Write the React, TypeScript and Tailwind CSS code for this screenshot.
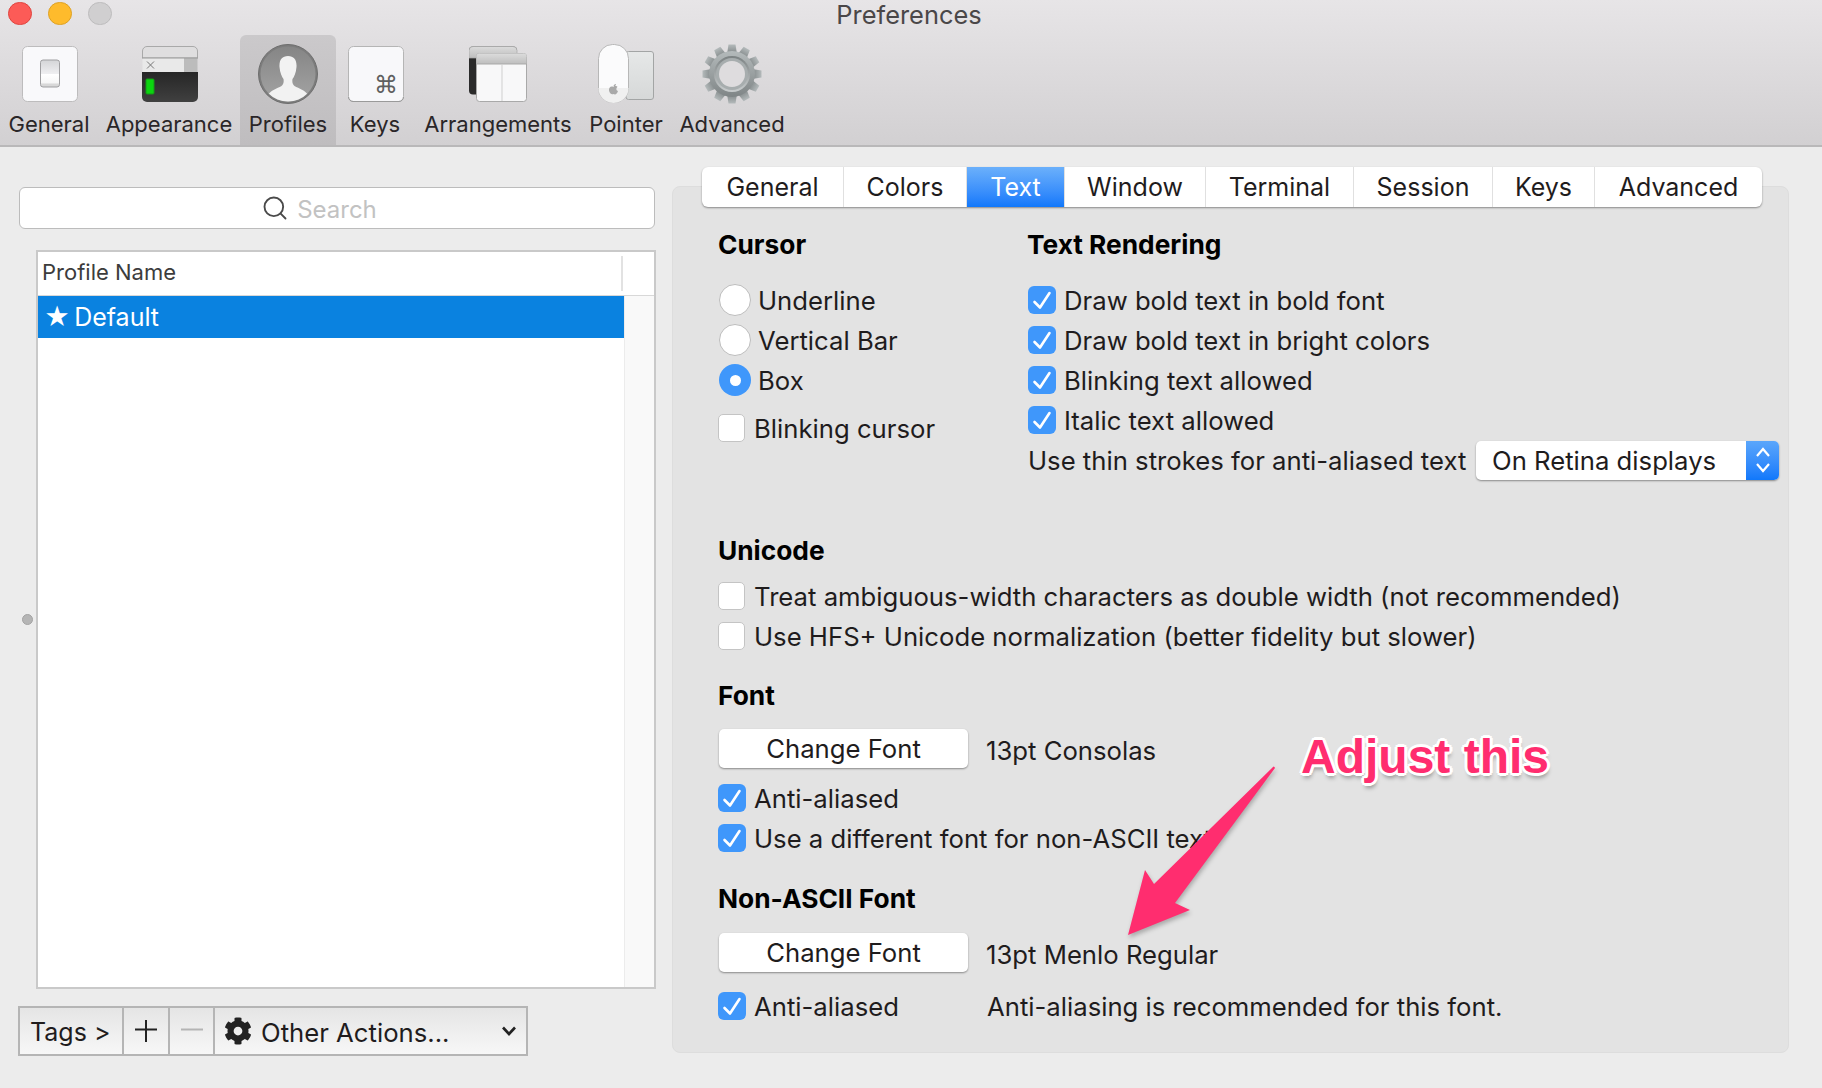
import React from "react";
import { Search } from "lucide-react";
import { FaCog } from "react-icons/fa";

function Icon1() {
  return (
    <svg width="56" height="56" viewBox="0 0 56 56">
      <defs>
        <linearGradient id="g1" x1="0" y1="0" x2="0" y2="1"><stop offset="0" stopColor="#d4d5d7" /><stop offset="0.5" stopColor="#eeeef0" /><stop offset="0.52" stopColor="#ffffff" /><stop offset="0.86" stopColor="#f6f6f6" /><stop offset="0.88" stopColor="#d8d8d8" /><stop offset="1" stopColor="#d8d8d8" /></linearGradient>
      </defs>
      <rect x="0.5" y="0.5" width="55" height="55" rx="5" fill="#f9f9fb" stroke="#bdbcbd" />
      <rect x="18.5" y="14" width="19" height="27" rx="2.5" fill="url(#g1)" stroke="#9f9fa1" />
    </svg>
  );
}
function Icon2() {
  return (
    <svg width="56" height="56" viewBox="0 0 56 56">
      <defs>
        <linearGradient id="g2a" x1="0" y1="0" x2="0" y2="1"><stop offset="0" stopColor="#262626" /><stop offset="1" stopColor="#404040" /></linearGradient>
      </defs>
      <path d="M0.5 12 V5 a4.5 4.5 0 0 1 4.5 -4.5 H51 a4.5 4.5 0 0 1 4.5 4.5 V12 Z" fill="#dfdedf" stroke="#a9a9a9" />
      <rect x="0.5" y="12" width="42" height="14" fill="#e9e9e9" />
      <rect x="42" y="12" width="13.5" height="14" fill="#bcbcbc" />
      <path d="M0 12 H56" stroke="#9a9a9a" strokeWidth="1" />
      <path d="M5 15.5 L12 22.5 M12 15.5 L5 22.5" stroke="#777" strokeWidth="1" />
      <path d="M0 26 H56 V51 a5 5 0 0 1 -5 5 H5 a5 5 0 0 1 -5 -5 Z" fill="url(#g2a)" />
      <rect x="4" y="33" width="8" height="15" rx="1" fill="#0bd40f" stroke="#149a17" />
    </svg>
  );
}
function Icon3() {
  return (
    <svg width="60" height="60" viewBox="0 0 60 60">
      <defs>
        <linearGradient id="g3" x1="0" y1="0" x2="0" y2="1"><stop offset="0" stopColor="#858585" /><stop offset="1" stopColor="#a4a4a4" /></linearGradient>
        <clipPath id="c3"><circle cx="30" cy="30" r="27.5" /></clipPath>
      </defs>
      <circle cx="30" cy="30" r="29.5" fill="#7c7c7c" stroke="#6e6e6e" />
      <circle cx="30" cy="30" r="27.5" fill="url(#g3)" />
      <g clipPath="url(#c3)" fill="#f2f2f2">
        <path d="M30 12 C24 12 21 16 21.5 23 C22 29 24 33 25.5 35 C26 38 25.5 40.500 23.500 42 C19 44.500 13 46 9 52 L9 60 H51 V52 C47 46 41 44.500 36.500 42 C34.500 40.500 34 38 34.500 35 C36 33 38 29 38.500 23 C39 16 36 12 30 12 Z" />
      </g>
    </svg>
  );
}
function Icon4() {
  return (
    <svg width="56" height="56" viewBox="0 0 56 56">
      <rect x="0.5" y="0.5" width="55" height="55" rx="5" fill="#f8f8fa" stroke="#b5b5b5" />
      <path d="M0.5 51 a4.5 4.5 0 0 0 4.5 4.5 H51 a4.5 4.5 0 0 0 4.5 -4.5" fill="none" stroke="#9a9a9a" />
      <text x="38" y="47" textAnchor="middle" fontSize="24" fill="#5f5f5f" fontFamily="'DejaVu Sans', sans-serif">⌘</text>
    </svg>
  );
}
function Icon5() {
  return (
    <svg width="58" height="56" viewBox="0 0 58 56">
      <defs>
        <linearGradient id="g5" x1="0" y1="0" x2="0" y2="1"><stop offset="0" stopColor="#dcdcdc" /><stop offset="1" stopColor="#bebebe" /></linearGradient>
      </defs>
      <rect x="0" y="0.5" width="48" height="48" rx="4" fill="#2b2b2b" />
      <path d="M0 12 V4.5 a4 4 0 0 1 4 -4 H44 a4 4 0 0 1 4 4 V12 Z" fill="url(#g5)" stroke="#a8a8a8" strokeWidth="0.7" />
      <rect x="7.5" y="7.5" width="50" height="48" rx="3" fill="#f8f8f9" stroke="#a9a9a9" />
      <path d="M7.5 18 V10.5 a3 3 0 0 1 3 -3 H54.5 a3 3 0 0 1 3 3 V18 Z" fill="url(#g5)" />
      <path d="M7.5 18 H57.5" stroke="#a9a9a9" />
      <path d="M33 18 V55" stroke="#cfcfcf" />
    </svg>
  );
}
function Icon6() {
  return (
    <svg width="56" height="60" viewBox="0 0 56 60">
      <defs>
        <linearGradient id="g6" x1="0" y1="0" x2="0" y2="1"><stop offset="0" stopColor="#e6e8e8" /><stop offset="1" stopColor="#d6d8d8" /></linearGradient>
      </defs>
      <rect x="28" y="7.5" width="27.5" height="48" rx="2.5" fill="url(#g6)" stroke="#a3a5a5" />
      <rect x="0.5" y="0.5" width="30" height="58" rx="14" fill="#fbfbfc" stroke="#b7b7b7" />
      <path d="M0.5 44 a15 15 0 0 0 30 0" fill="#f0f0f0" />
      <path d="M15.500 43 c1 -1.500 3.500 -1 4 0 c-2 1.500 -1 3.500 .5 4 c-1 3 -2.500 4 -4.500 3 c-2 1 -4 -1 -4.500 -3.500 c-.5 -3 2 -5 4.500 -3.500 Z M15.500 42.500 c0 -1.500 1 -2.500 2.500 -2.500 c0 1.500 -1 2.500 -2.500 2.500 Z" fill="#a9a9a9" />
    </svg>
  );
}
function Gear() {
  const angles = [0, 30, 60, 90, 120, 150, 180, 210, 240, 270, 300, 330];
  return (
    <svg width="60" height="60" viewBox="0 0 60 60">
      <defs>
        <linearGradient id="g7" x1="0" y1="0" x2="0" y2="1"><stop offset="0" stopColor="#b4babb" /><stop offset="1" stopColor="#7f8586" /></linearGradient>
        <linearGradient id="g7b" x1="0" y1="0" x2="0" y2="1"><stop offset="0" stopColor="#7b8182" /><stop offset="1" stopColor="#c9cdce" /></linearGradient>
      </defs>
      {angles.map((a) => (
        <path key={a} d="M26.500 0.5 H33.500 L35 10 H25 Z" fill="url(#g7)" transform={`rotate(${a} 30 30)`} />
      ))}
      <circle cx="30" cy="30" r="23" fill="url(#g7)" />
      <circle cx="30" cy="30" r="18" fill="url(#g7b)" />
      <circle cx="30" cy="30" r="16" fill="#a7adae" />
      <circle cx="30" cy="30" r="13" fill="#dedcde" />
    </svg>
  );
}

function ToolItem({ label, width, active, nudge, children }: { label: string; width: string; active?: boolean; nudge?: boolean; children: React.ReactNode }) {
  return (
    <div className={`${width} h-[110px] flex flex-col items-center shrink-0 rounded-t-[6px] ${active ? "bg-gradient-to-b from-[#cbc9cb] to-[#bfbdbf]" : ""}`}>
      <div className={`h-[68px] mt-[5px] flex items-center justify-center ${nudge ? "pl-[2px]" : ""}`}>{children}</div>
      <div className="text-[22px] leading-[26px] mt-[3px] text-[#2a2628] whitespace-nowrap">{label}</div>
    </div>
  );
}

function Check({ on = true, className = "" }: { on?: boolean; className?: string }) {
  return on ? (
    <span className={`w-[28px] h-[28px] rounded-[6px] bg-[#3f97fb] shrink-0 flex items-center justify-center ${className}`}>
      <svg width="28" height="28" viewBox="0 0 28 28"><path d="M6.500 16 L12 21.500 L21.500 7" fill="none" stroke="#fff" strokeWidth="2.6" strokeLinecap="round" strokeLinejoin="round" /></svg>
    </span>
  ) : (
    <span className={`w-[27px] h-[28px] rounded-[5px] bg-white border border-[#c4c4c4] shrink-0 ${className}`} />
  );
}
function CheckRow({ label, on = true }: { label: string; on?: boolean }) {
  return (
    <div className="h-[40px] flex items-center whitespace-nowrap">
      <Check on={on} className={on ? "mr-[8px]" : "mr-[9px]"} />
      <span className="pt-[2px]">{label}</span>
    </div>
  );
}
function RadioRow({ label, on }: { label: string; on?: boolean }) {
  return (
    <div className="h-[40px] flex items-center whitespace-nowrap ml-[1px]">
      <span className={`w-[32px] h-[32px] rounded-full shrink-0 mr-[7px] flex items-center justify-center ${on ? "bg-[#3f97fb]" : "bg-white border border-[#bdbdbd]"}`}>
        {on ? <span className="w-[11px] h-[11px] rounded-full bg-white" /> : null}
      </span>
      <span className="pt-[2px]">{label}</span>
    </div>
  );
}
function Heading({ children, className = "" }: { children: React.ReactNode; className?: string }) {
  return <div className={`h-[36px] flex items-center font-bold text-black text-[26.3px] whitespace-nowrap ${className}`}>{children}</div>;
}
function FontButton() {
  return (
    <div className="w-[249px] h-[39px] pt-[2px] bg-white rounded-[5px] shadow-[0_1px_2px_rgba(0,0,0,0.4)] flex items-center justify-center shrink-0">Change Font</div>
  );
}

const tabs: [string, string, boolean?][] = [
  ["General", "w-[142px]"],
  ["Colors", "w-[123px]"],
  ["Text", "w-[98px]", true],
  ["Window", "w-[141px]"],
  ["Terminal", "w-[148px]"],
  ["Session", "w-[139px]"],
  ["Keys", "w-[102px]"],
  ["Advanced", "w-[167px]"],
];

export default function App() {
  return (
    <div className="w-[1822px] h-[1088px] relative overflow-hidden flex flex-col bg-[#ececec] text-[#1f1c1d] text-[25.7px] font-['Inter',sans-serif]">
      {/* Toolbar */}
      <div className="h-[147px] shrink-0 border-b-2 border-[#b9b8b9] bg-gradient-to-b from-[#e7e5e7] to-[#d2d0d2] flex flex-col">
        <div className="h-[36px] flex relative">
          <div className="flex items-start pt-[2px] pl-[8px] gap-[16px]">
            <span className="w-[24px] h-[23px] rounded-full bg-[#fc5b57] border border-[#e0443e]" />
            <span className="w-[24px] h-[23px] rounded-full bg-[#febb2c] border border-[#dea123]" />
            <span className="w-[24px] h-[23px] rounded-full bg-[#d0cfd0] border border-[#bdbcbd]" />
          </div>
          <div className="absolute left-0 right-0 top-0 h-[30px] flex items-center justify-center text-[#4a4748] text-[25.4px] pr-[4px]">Preferences</div>
        </div>
        <div className="flex">
          <ToolItem label="General" width="w-[98px]" nudge><Icon1 /></ToolItem>
          <ToolItem label="Appearance" width="w-[142px]" nudge><Icon2 /></ToolItem>
          <ToolItem label="Profiles" width="w-[96px]" active><Icon3 /></ToolItem>
          <ToolItem label="Keys" width="w-[78px]" nudge><Icon4 /></ToolItem>
          <ToolItem label="Arrangements" width="w-[168px]"><Icon5 /></ToolItem>
          <ToolItem label="Pointer" width="w-[88px]"><Icon6 /></ToolItem>
          <ToolItem label="Advanced" width="w-[124px]"><Gear /></ToolItem>
        </div>
      </div>

      <div className="flex flex-1 min-h-0">
        {/* Left column */}
        <div className="w-[672px] shrink-0 pl-[19px] flex flex-col">
          <div className="mt-[40px] w-[636px] h-[42px] bg-white border border-[#bcbcbc] rounded-[6px] flex items-center justify-center gap-[8px] pr-[36px]">
            <Search size={28} strokeWidth={1.6} className="text-[#4a4a4a]" />
            <span className="text-[#c2c2c2] text-[24px] pt-[4px]">Search</span>
          </div>
          <div className="flex mt-[21px] h-[739px]">
            <div className="w-[17px] shrink-0 flex items-center">
              <span className="w-[11px] h-[11px] ml-[3px] rounded-full bg-[#b5b5b5] border border-[#a3a3a3]" />
            </div>
            <div className="w-[620px] border-2 border-[#c9c9c9] bg-white flex flex-col">
              <div className="h-[44px] shrink-0 border-b border-[#d8d8d8] flex items-center relative">
                <span className="pl-[4px] pb-[2px] text-[22px] text-[#3c3c3c]">Profile Name</span>
                <span className="absolute left-[583px] top-[4px] bottom-[4px] w-[2px] bg-[#e2e2e2]" />
              </div>
              <div className="flex flex-1 min-h-0">
                <div className="w-[586px] shrink-0">
                  <div className="h-[42px] bg-[#0a82e0] text-white flex items-center pl-[6px] pt-[2px] text-[25px]"><span className="mr-[4px]">★</span>Default</div>
                </div>
                <div className="flex-1 bg-[#f9f9f9] border-l border-[#ececec]" />
              </div>
            </div>
          </div>
          <div className="mt-[17px] -ml-[1px] w-[510px] h-[50px] border-2 border-[#b5b5b5] bg-gradient-to-b from-[#e5e5e5] to-[#f7f7f7] flex items-stretch">
            <div className="w-[104px] shrink-0 border-r-2 border-[#b5b5b5] flex items-center pl-[10px] pt-[4px] text-[25px]">Tags &gt;</div>
            <div className="w-[46px] shrink-0 border-r-2 border-[#b5b5b5] flex items-center justify-center">
              <svg width="24" height="28" viewBox="0 0 24 28"><path d="M12 3 V25 M1 12.500 H23" stroke="#222" strokeWidth="2" /></svg>
            </div>
            <div className="w-[45px] shrink-0 border-r-2 border-[#b5b5b5] flex items-center justify-center">
              <svg width="24" height="28" viewBox="0 0 24 28"><path d="M1 12.500 H23" stroke="#b4b4b4" strokeWidth="2" /></svg>
            </div>
            <div className="flex-1 flex items-center pl-[9px]">
              <FaCog size={28} className="text-[#222] mr-[9px]" />
              <span className="pt-[4px]">Other Actions...</span>
              <svg className="ml-auto mr-[9px]" width="16" height="12" viewBox="0 0 16 12"><path d="M2 2.500 L8 9 L14 2.500" fill="none" stroke="#222" strokeWidth="2.6" /></svg>
            </div>
          </div>
        </div>

        {/* Right panel */}
        <div className="mt-[39px] w-[1117px] h-[867px] shrink-0 bg-[#e3e3e3] border border-[#dddddd] rounded-[8px] pl-[45px] flex flex-col">
          <div className="-mt-[20px] -ml-[16px] w-[1060px] h-[40px] shrink-0 bg-white rounded-[6px] shadow-[0_1px_2px_rgba(0,0,0,0.4)] flex overflow-hidden text-[25px]">
            {tabs.map(([t, w, on]) => (
              <div key={t} className={`${w} shrink-0 pt-[2px] flex items-center justify-center border-r border-[#e0e0e0] last:border-r-0 ${on ? "bg-gradient-to-b from-[#6bb0fb] to-[#0f78fb] text-white" : ""}`}>{t}</div>
            ))}
          </div>

          <div className="flex mt-[20px]">
            <div className="w-[309px] shrink-0 flex flex-col">
              <Heading>Cursor</Heading>
              <div className="mt-[17px]">
                <RadioRow label="Underline" />
                <RadioRow label="Vertical Bar" />
                <RadioRow label="Box" on />
              </div>
              <div className="mt-[8px]"><CheckRow label="Blinking cursor" on={false} /></div>
            </div>
            <div className="flex flex-col">
              <Heading>Text Rendering</Heading>
              <div className="mt-[17px] ml-[1px]">
                <CheckRow label="Draw bold text in bold font" />
                <CheckRow label="Draw bold text in bright colors" />
                <CheckRow label="Blinking text allowed" />
                <CheckRow label="Italic text allowed" />
                <div className="h-[40px] flex items-center whitespace-nowrap">
                  <span className="w-[448px] pt-[2px] shrink-0">Use thin strokes for anti-aliased text</span>
                  <div className="w-[303px] h-[39px] bg-white rounded-[5px] shadow-[0_1px_2px_rgba(0,0,0,0.4)] flex items-center overflow-hidden shrink-0">
                    <span className="pl-[16px] pt-[2px]">On Retina displays</span>
                    <div className="ml-auto w-[33px] h-full bg-gradient-to-b from-[#5aa6fb] to-[#0f78fb] flex items-center justify-center">
                      <svg width="18" height="30" viewBox="0 0 18 30"><path d="M3 11 L9 4 L15 11 M3 19 L9 26 L15 19" fill="none" stroke="#fff" strokeWidth="2.2" /></svg>
                    </div>
                  </div>
                </div>
              </div>
            </div>
          </div>

          <Heading className="mt-[53px]">Unicode</Heading>
          <div className="mt-[7px]">
            <CheckRow label="Treat ambiguous-width characters as double width (not recommended)" on={false} />
            <CheckRow label="Use HFS+ Unicode normalization (better fidelity but slower)" on={false} />
          </div>

          <Heading className="mt-[22px]">Font</Heading>
          <div className="mt-[15px] h-[40px] flex items-start ml-[1px]">
            <FontButton />
            <span className="ml-[18px] mt-[3px]">13pt Consolas</span>
          </div>
          <div className="mt-[9px]">
            <CheckRow label="Anti-aliased" />
            <CheckRow label="Use a different font for non-ASCII text" />
          </div>

          <Heading className="mt-[23px]">Non-ASCII Font</Heading>
          <div className="mt-[16px] h-[40px] flex items-start ml-[1px]">
            <FontButton />
            <span className="ml-[18px] mt-[3px]">13pt Menlo Regular</span>
          </div>
          <div className="mt-[13px] h-[40px] flex items-center whitespace-nowrap">
            <Check className="mr-[8px]" />
            <span className="w-[233px] shrink-0 pt-[2px]">Anti-aliased</span>
            <span className="pt-[2px]">Anti-aliasing is recommended for this font.</span>
          </div>
        </div>
      </div>

      {/* Annotation */}
      <svg className="absolute left-[1120px] top-[760px] drop-shadow-[1px_3px_2px_rgba(0,0,0,0.25)]" width="170" height="185" viewBox="0 0 170 185">
        <path d="M152 8 Q154 5 155 8 L55 143 L70 150 L8 175 L25 110 L34 124 Z" fill="#ff2d6f" />
      </svg>
      <div className="absolute left-[1301px] top-[727px] text-[48px] leading-[60px] font-bold text-[#ff2d6f] whitespace-nowrap font-['Liberation_Sans',sans-serif] [text-shadow:-2px_-2px_0_#fff,2px_-2px_0_#fff,-2px_2px_0_#fff,2px_2px_0_#fff,0_3px_0_#fff,3px_0_0_#fff,-3px_0_0_#fff,0_-3px_0_#fff,1px_5px_4px_rgba(0,0,0,0.35)]">Adjust this</div>
    </div>
  );
}
